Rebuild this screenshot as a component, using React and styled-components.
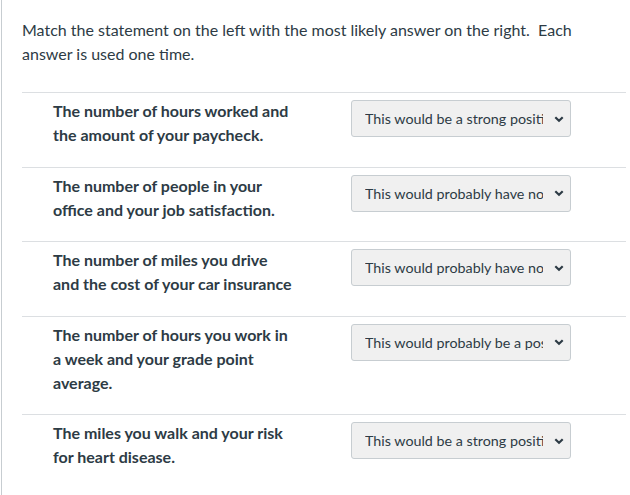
import React from 'react';
import styled, { createGlobalStyle } from 'styled-components';

const GlobalStyle = createGlobalStyle`
  body {
    margin: 0;
    background: #fff;
    font-family: Lato, "Noto Sans", sans-serif;
    color: #2d3b45;
  }
`;

const Page = styled.div`
  margin-left: 1px;
  border-left: 1px solid #c7cdd1;
  min-height: 495px;
  padding: 18px 4px 0 20px;
  box-sizing: border-box;
`;

const Intro = styled.p`
  margin: 0 0 26px;
  font-size: 16px;
  line-height: 24px;
  max-width: 570px;
  white-space: pre-wrap;
`;

const List = styled.div`
  border-top: 1px solid #dcdfe2;
`;

const Row = styled.div`
  display: flex;
  align-items: flex-start;
  padding: 6px 0 19.6px 31px;
  border-bottom: 1px solid #dcdfe2;
  &:last-child {
    border-bottom: none;
  }
`;

const Statement = styled.div`
  width: 240px;
  font-size: 16px;
  font-weight: 700;
  line-height: 24px;
`;

const Select = styled.div`
  margin-left: 58px;
  margin-top: 1px;
  width: 220px;
  height: 37px;
  box-sizing: border-box;
  display: flex;
  align-items: center;
  padding: 0 6px 0 13px;
  background: #f0f0f0;
  border: 1px solid #c7cdd1;
  border-radius: 3px;
  font-size: 14.3px;
  color: #2d3b45;
`;

const Value = styled.span`
  flex: 1;
  overflow: hidden;
  white-space: nowrap;
`;

const Chevron = styled.svg`
  width: 10px;
  height: 10px;
  margin-left: 11px;
  flex-shrink: 0;
`;

const rows = [
  ['The number of hours worked and the amount of your paycheck.', 'This would be a strong positive correlation'],
  ['The number of people in your office and your job satisfaction.', 'This would probably have no correlation'],
  ['The number of miles you drive and the cost of your car insurance', 'This would probably have no correlation'],
  ['The number of hours you work in a week and your grade point average.', 'This would probably be a positive correlation'],
  ['The miles you walk and your risk for heart disease.', 'This would be a strong positive correlation'],
];

export default function App() {
  return (
    <>
      <GlobalStyle />
      <Page>
        <Intro>Match the statement on the left with the most likely answer on the right.  Each answer is used one time.</Intro>
        <List>
          {rows.map(([q, a], i) => (
            <Row key={i}>
              <Statement>{q}</Statement>
              <Select>
                <Value>{a}</Value>
                <Chevron viewBox="0 0 10 10">
                  <path d="M1.3 3.3 L5 6.8 L8.7 3.3" fill="none" stroke="#2d3b45" strokeWidth="2.2" />
                </Chevron>
              </Select>
            </Row>
          ))}
        </List>
      </Page>
    </>
  );
}
